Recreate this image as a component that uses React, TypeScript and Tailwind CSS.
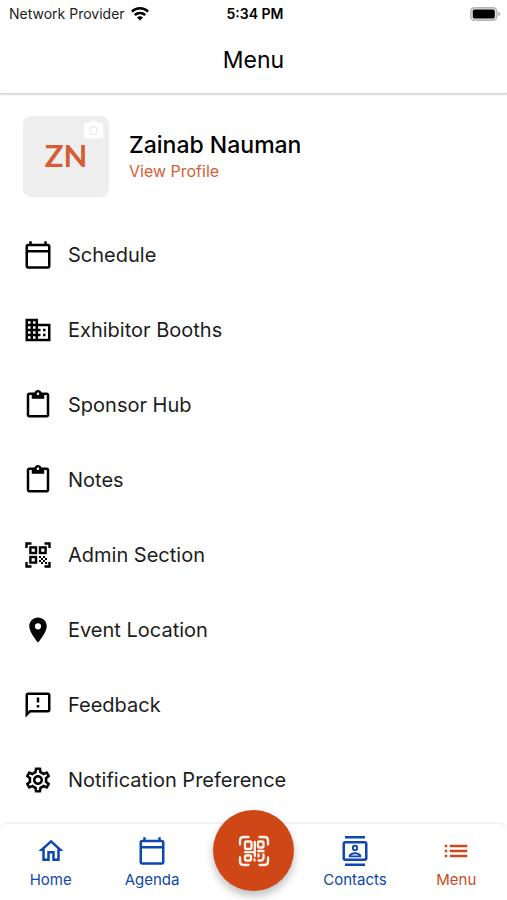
import type { ComponentType } from 'react';
import {
  MdCameraAlt,
  MdList,
  MdLocationOn,
  MdOutlineBusiness,
  MdOutlineCalendarToday,
  MdOutlineContacts,
  MdOutlineContentPaste,
  MdOutlineFeedback,
  MdOutlineHome,
  MdOutlineSettings,
} from 'react-icons/md';

type IconType = ComponentType<{ className?: string }>;

function QrFrameIcon({ className }: { className?: string }) {
  return (
    <svg viewBox="0 0 30 30" className={className} fill="none" stroke="currentColor" strokeWidth="2.4" aria-hidden="true">
      <path d="M3.500 8V3.500H8.500M21.500 3.500H26.500V8M26.500 22V26.500H21.500M8.500 26.500H3.500V22" />
      <rect x="7.400" y="7.400" width="5.600" height="5.600" />
      <rect x="17" y="7.400" width="5.600" height="5.600" />
      <rect x="7.400" y="17" width="5.600" height="5.600" />
      <path
        d="M16 16h2v2h-2zM20 16h2v2h-2zM18 18h2v2h-2zM22 18h2v2h-2zM16 20h2v2h-2zM20 20h2v2h-2zM18 22h2v2h-2zM22 22h2v2h-2z"
        fill="currentColor"
        stroke="none"
      />
    </svg>
  );
}

const menuItems: { label: string; icon: IconType }[] = [
  { label: 'Schedule', icon: MdOutlineCalendarToday },
  { label: 'Exhibitor Booths', icon: MdOutlineBusiness },
  { label: 'Sponsor Hub', icon: MdOutlineContentPaste },
  { label: 'Notes', icon: MdOutlineContentPaste },
  { label: 'Admin Section', icon: QrFrameIcon },
  { label: 'Event Location', icon: MdLocationOn },
  { label: 'Feedback', icon: MdOutlineFeedback },
  { label: 'Notification Preference', icon: MdOutlineSettings },
];

function WifiIcon() {
  return (
    <svg viewBox="0 0 18 14" className="h-[14px] w-[18px] text-black" fill="none" stroke="currentColor" strokeWidth="2.5" aria-hidden="true">
      <path d="M0.9 4.600C5.300 0.200 12.700 0.200 17.100 4.600" />
      <path d="M3.800 8C6.700 5.200 11.300 5.200 14.200 8" />
      <path d="M6 10.400C7.700 8.800 10.300 8.800 12 10.400L9 13.500Z" fill="currentColor" stroke="none" />
    </svg>
  );
}

function BatteryIcon() {
  return (
    <svg viewBox="0 0 31 14" className="h-[14px] w-[31px]" aria-hidden="true">
      <rect x="0.8" y="0.8" width="26" height="12.400" rx="3.600" fill="#e4e4e4" stroke="#b5b5b5" strokeWidth="1.400" />
      <rect x="2.800" y="2.600" width="22" height="8.800" rx="1.600" fill="#000" />
      <path d="M28.200 4.800c1.500.5 2.200 1.200 2.200 2.200s-.7 1.700-2.200 2.200z" fill="#b5b5b5" />
    </svg>
  );
}

function ScanIcon() {
  return (
    <svg viewBox="0 0 32 32" className="size-8 text-[#fff4ee]" fill="none" stroke="currentColor" strokeWidth="2.300" strokeLinecap="round" strokeLinejoin="round" aria-hidden="true">
      <path d="M2 9.500V5.500Q2 2 5.500 2H10.500M21.500 2H26.500Q30 2 30 5.500V9.500M30 22.500V26.500Q30 30 26.500 30H21.500M10.500 30H5.500Q2 30 2 26.500V22.500" />
      <rect x="7" y="6.500" width="6.500" height="7.500" rx="1.500" />
      <rect x="20" y="6.500" width="5.500" height="6" rx="1.500" />
      <rect x="7" y="20.500" width="6" height="5" rx="1.500" />
      <path d="M16.800 7V16.500M7 17.200H16.800V21M20 16H25.500M16.500 24.500V25.500M20.500 19.500V21.500M25.500 19.500V22.500Q25.500 25.500 22.500 25.500H20.500" />
    </svg>
  );
}

function NavItem({ label, icon: Icon, active = false }: { label: string; icon: IconType; active?: boolean }) {
  return (
    <a href="#" aria-current={active ? 'page' : undefined} className={`flex flex-1 flex-col items-center pt-3 ${active ? 'text-[#cb4a1c]' : 'text-[#0d47b0]'}`}>
      <Icon className="size-[30px]" />
      <span className="mt-1 text-[15px] leading-5">{label}</span>
    </a>
  );
}

export default function App() {
  return (
    <div className="flex min-h-screen flex-col bg-white font-['Inter',sans-serif] text-black">
      {/* Header */}
      <header className="border-b border-[#d4d4d4] shadow-[0_1px_2px_rgba(0,0,0,0.15)]">
        <div className="grid h-7 grid-cols-[1fr_auto_1fr] items-center pr-1.5 pl-[9px] text-[14px] leading-5">
          <div className="flex items-center gap-1.5 text-[#222222]">
            <span>Network Provider</span>
            <WifiIcon />
          </div>
          <span className="font-semibold">5:34 PM</span>
          <div className="flex justify-end">
            <BatteryIcon />
          </div>
        </div>
        <h1 className="h-[65px] pt-4 text-center text-[23px] leading-8">Menu</h1>
      </header>

      <main className="flex-1 pb-1">
        {/* Profile */}
        <section className="flex items-center gap-5 px-[23px] pt-[22px] pb-5">
          <div className="relative flex h-[81px] w-[86px] items-center justify-center rounded-lg bg-[#eeeeee]">
            <span className="pb-1 font-['Lato',sans-serif] text-[31px] leading-8 font-bold text-[#d45d35]">ZN</span>
            <MdCameraAlt className="absolute top-[3px] right-1 size-[23px] text-white" />
          </div>
          <div>
            <h2 className="text-[23px] leading-7 font-medium">Zainab Nauman</h2>
            <a href="#" className="block text-[16px] leading-6 text-[#d45d35]">View Profile</a>
          </div>
        </section>

        {/* Menu */}
        <ul>
          {menuItems.map(({ label, icon: Icon }) => (
            <li key={label}>
              <a href="#" className="flex h-[75px] items-center gap-[15px] px-[23px]">
                <Icon className="size-[30px] shrink-0" />
                <span className="text-[20px] leading-7 text-[#1c1c1c]">{label}</span>
              </a>
            </li>
          ))}
        </ul>
      </main>

      {/* Bottom tabs */}
      <nav className="sticky bottom-0 flex h-[77px] rounded-t-lg border-t border-[#f0f0f0] bg-white shadow-[0_-1px_2px_rgba(0,0,0,0.04)]">
        <NavItem label="Home" icon={MdOutlineHome} />
        <NavItem label="Agenda" icon={MdOutlineCalendarToday} />
        <div className="flex flex-1 justify-center">
          <button type="button" aria-label="Scan code" className="-mt-3.5 flex size-[81px] shrink-0 items-center justify-center rounded-full bg-[#cf4717] shadow-[0_5px_8px_rgba(0,0,0,0.25)]">
            <ScanIcon />
          </button>
        </div>
        <NavItem label="Contacts" icon={MdOutlineContacts} />
        <NavItem label="Menu" icon={MdList} active />
      </nav>
    </div>
  );
}
